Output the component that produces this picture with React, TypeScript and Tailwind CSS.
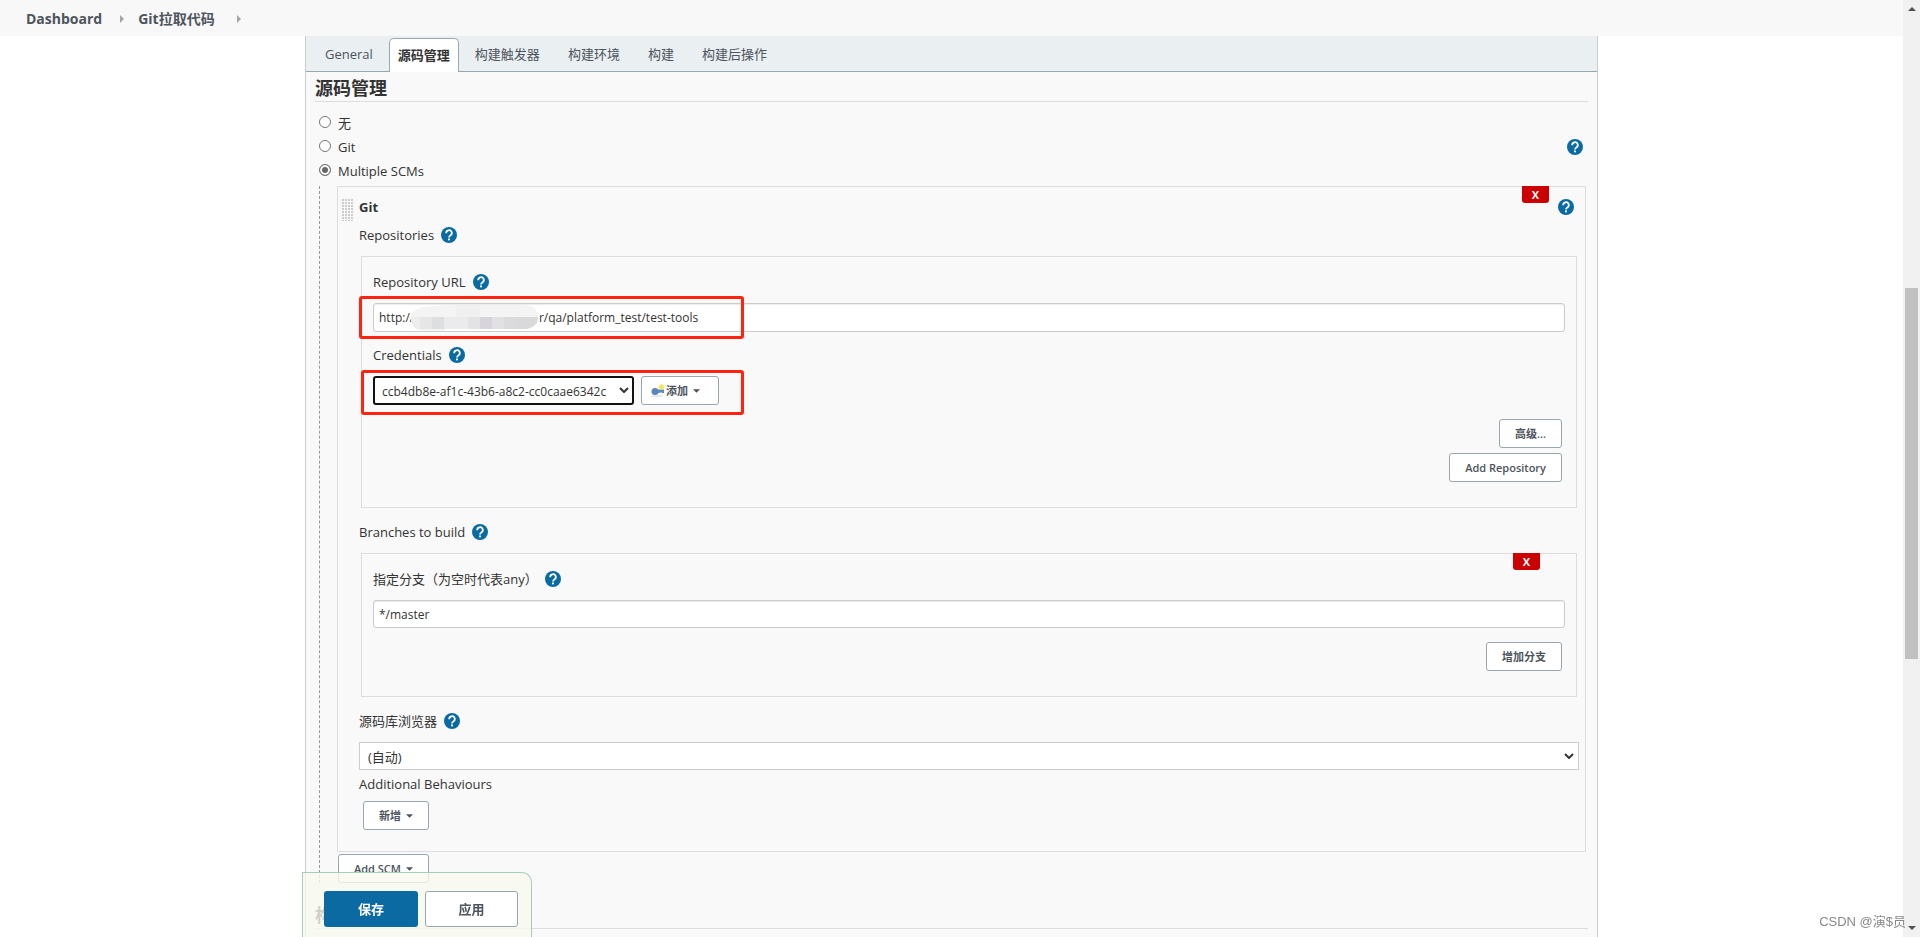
import { useState } from "react";
import type { ReactNode } from "react";

const TABS = ["General", "源码管理", "构建触发器", "构建环境", "构建", "构建后操作"];
const SCM_OPTIONS = ["无", "Git", "Multiple SCMs"];
const REPO_URL = "http://" + " ".repeat(40) + "r/qa/platform_test/test-tools";

const HelpIcon = ({ label }: { label: string }) => (
  <button type="button" aria-label={`Help: ${label}`} className="block size-4 shrink-0">
    <svg viewBox="0 0 24 24" className="size-4">
      <circle cx="12" cy="12" r="12" fill="#0b6aa2" />
      <path d="M7.800 9.400a4.200 4.200 0 1 1 6.400 3.200c-1.500 1-2.200 1.600-2.200 3.200" fill="none" stroke="#fff" strokeWidth="2.600" />
      <rect x="10.600" y="17.200" width="2.800" height="2.800" fill="#fff" />
    </svg>
  </button>
);

const Caret = () => (
  <svg viewBox="0 0 8 4" className="h-1 w-[7px]" aria-hidden="true">
    <path d="M0 0h8L4 4z" fill="#4d545d" />
  </svg>
);

const KeyIcon = () => (
  <svg viewBox="0 0 16 16" className="size-4" aria-hidden="true">
    <ellipse cx="7" cy="13" rx="6" ry="1.500" fill="#e6e8ec" />
    <circle cx="5" cy="8.500" r="3.500" fill="#5b85c2" />
    <path d="M7 6.500h7v3.500h-2l-1-1-1 1H7z" fill="#6088c0" />
    <circle cx="11.500" cy="4" r="2.500" fill="#f7ee6a" />
    <path d="M11.500 1v6M8.500 4h6" stroke="#f0e040" strokeWidth="1" />
  </svg>
);

const Chevron = () => (
  <svg viewBox="0 0 10 6" className="pointer-events-none absolute top-[11px] right-[5px] h-[6px] w-[10px]" aria-hidden="true">
    <path d="M1 1l4 4 4-4" fill="none" stroke="#333" strokeWidth="2" />
  </svg>
);

const Crumb = () => (
  <svg viewBox="0 0 4 8" className="h-[8px] w-1" aria-hidden="true">
    <path d="M0 0l4 4-4 4z" fill="#a5a5a5" />
  </svg>
);

const Button = ({ children, className = "" }: { children: ReactNode; className?: string }) => (
  <button
    type="button"
    className={`flex h-[29px] items-center justify-center rounded-[3px] border border-[#98a6ad] bg-white text-[11px] font-semibold text-[#4d545d] ${className}`}
  >
    {children}
  </button>
);

const DeleteButton = ({ className }: { className: string }) => (
  <button
    type="button"
    aria-label="Delete"
    className={`absolute -top-px h-[17px] w-[27px] rounded-b-[3px] bg-[#c00] text-[11px] leading-4 font-bold text-white ${className}`}
  >
    X
  </button>
);

const Label = ({ children, htmlFor, help }: { children: ReactNode; htmlFor?: string; help?: string }) => (
  <div className="flex h-5 items-center gap-[7px]">
    <label htmlFor={htmlFor}>{children}</label>
    {help && <HelpIcon label={help} />}
  </div>
);

const SectionTitle = ({ children }: { children: ReactNode }) => (
  <h2 className="h-[30px] border-b border-[#ddd] text-lg leading-8 font-bold">{children}</h2>
);

const inputClass =
  "block w-full rounded-[3px] border border-[#ccc] bg-white px-[5px] text-xs shadow-[inset_0_1px_1px_rgba(0,0,0,0.08)] outline-none";

// Pixel mosaic laid over the host part of the repository URL
const Mosaic = () => (
  <svg viewBox="0 0 128 26" className="absolute top-[2px] left-[38px] h-[26px] w-32" aria-hidden="true">
    <clipPath id="mosaic">
      <path d="M13 2L40 0h75q12 2 12 12t-12 12H34v2H12Q0 24 0 14T13 2z" />
    </clipPath>
    <g clipPath="url(#mosaic)">
      <rect width="128" height="26" fill="#f4f4f5" />
      <rect x="45" width="24" height="12" fill="#f0f0f1" />
      <rect y="12" width="9" height="12" fill="#ededed" />
      <rect x="9" y="12" width="12" height="12" fill="#e6e6e7" />
      <rect x="21" y="12" width="12" height="12" fill="#dcdedf" />
      <rect x="33" y="12" width="24" height="12" fill="#ebebed" />
      <rect x="57" y="12" width="12" height="12" fill="#e3e2e5" />
      <rect x="69" y="12" width="12" height="12" fill="#d7d5d9" />
      <rect x="81" y="12" width="12" height="12" fill="#e1e1e4" />
      <rect x="93" y="12" width="12" height="12" fill="#dbdbde" />
      <rect x="105" y="12" width="23" height="12" fill="#d9d9db" />
    </g>
  </svg>
);

const ScrollBar = () => (
  <div className="fixed inset-y-0 right-0 z-30 flex w-[17px] flex-col items-center bg-[#f1f1f1]" aria-hidden="true">
    <svg viewBox="0 0 8 4" className="mt-[7px] h-1 w-2">
      <path d="M4 0l4 4H0z" fill="#505050" />
    </svg>
    <div className="mt-[277px] h-[371px] w-[13px] bg-[#c1c1c1]" />
    <svg viewBox="0 0 8 4" className="mt-auto mb-[7px] h-1 w-2">
      <path d="M0 0h8L4 4z" fill="#505050" />
    </svg>
  </div>
);

const App = () => {
  const [tab, setTab] = useState("源码管理");
  const [scm, setScm] = useState("Multiple SCMs");

  return (
    <div className="h-screen overflow-hidden bg-white pr-[17px] font-['Segoe_UI','Open_Sans','Noto_Sans_CJK_SC',sans-serif] text-[13px] leading-5 text-[#333]">
      <nav className="flex h-9 items-center bg-[#f8f8f8] pt-[2px] pl-[26px] text-sm font-bold text-[#4d545d]">
        <a href="#dashboard" className="mr-[18px]">Dashboard</a>
        <Crumb />
        <a href="#job" className="mr-[22px] ml-[14px]">Git拉取代码</a>
        <Crumb />
      </nav>

      <main className="mx-[305px] h-full border-x border-[#ccc] bg-[#f9f9f9]">
        <div role="tablist" className="flex h-9 items-end border-b border-[#98a6ad] bg-[#eaeff2] pl-[5px] text-[#4d545d]">
          {TABS.map((name) => (
            <button
              key={name}
              type="button"
              role="tab"
              aria-selected={tab === name}
              onClick={() => setTab(name)}
              className={
                tab === name
                  ? "mx-[2px] -mb-px h-[34px] rounded-t-[5px] border border-b-0 border-[#98a6ad] bg-white px-2 pb-[2px] font-bold text-[#333]"
                  : "h-[33px] px-[14px] pb-[2px]"
              }
            >
              {name}
            </button>
          ))}
        </div>

        <div className="px-[9px]">
          <SectionTitle>源码管理</SectionTitle>

          <div className="mt-[9px] ml-1">
            {SCM_OPTIONS.map((name) => (
              <div key={name} className="flex h-6 items-center">
                <input
                  id={name}
                  type="radio"
                  name="scm"
                  checked={scm === name}
                  onChange={() => setScm(name)}
                  className="mr-[7px] mb-[2px] size-3 appearance-none rounded-full border border-[#767676] bg-white checked:bg-[#666] checked:shadow-[inset_0_0_0_2px_#fff]"
                />
                <label htmlFor={name}>{name}</label>
                {name === "Git" && (
                  <div className="mr-[5px] ml-auto">
                    <HelpIcon label="Git" />
                  </div>
                )}
              </div>
            ))}
          </div>

          <div className="mt-[3px] mr-[2px] ml-1 border-l border-dashed border-[#999] pl-[17px]">
            <section className="relative border border-[#ddd] pt-[10px] pr-[6px] pb-[21px] pl-[21px]">
              <svg className="absolute top-3 left-1 h-[22px] w-[11px]" aria-hidden="true">
                <pattern id="grip" width="3" height="3" patternUnits="userSpaceOnUse">
                  <rect width="2" height="2" fill="#ccc" />
                </pattern>
                <rect width="11" height="22" fill="url(#grip)" />
              </svg>
              <DeleteButton className="right-9" />
              <div className="flex h-5 items-center justify-between pr-[5px]">
                <h3 className="font-bold">Git</h3>
                <HelpIcon label="Git" />
              </div>

              <div className="mt-2">
                <Label help="Repositories">Repositories</Label>
              </div>
              <div className="mx-[2px] mt-[11px] border border-[#ddd] px-[11px] pt-[15px] pb-[25px]">
                <Label htmlFor="url" help="Repository URL">Repository URL</Label>
                <div className="relative mt-[11px]">
                  <input id="url" className={`${inputClass} h-[29px]`} defaultValue={REPO_URL} />
                  <Mosaic />
                  <div className="pointer-events-none absolute -top-[7px] -left-[14px] h-[43px] w-[385px] rounded-[3px] border-3 border-[#ff2310]" />
                </div>
                <div className="mt-[13px]">
                  <Label htmlFor="credentials" help="Credentials">Credentials</Label>
                </div>
                <div className="relative mt-[11px] flex gap-[7px]">
                  <div className="relative">
                    <select
                      id="credentials"
                      className="block h-[29px] w-[261px] appearance-none rounded-[3px] border-2 border-[#101010] bg-white pt-[2px] pl-[7px] text-xs outline-none"
                    >
                      <option>ccb4db8e-af1c-43b6-a8c2-cc0caae6342c</option>
                    </select>
                    <Chevron />
                  </div>
                  <Button className="w-[78px] pr-[10px]">
                    <KeyIcon />
                    <span className="mr-[5px]">添加</span>
                    <Caret />
                  </Button>
                  <div className="pointer-events-none absolute -top-[6px] -left-3 h-[45px] w-[383px] rounded-[3px] border-3 border-[#ff2310]" />
                </div>
                <div className="mt-[14px] flex flex-col items-end gap-[5px] pr-[3px]">
                  <Button className="px-[15px]">高级...</Button>
                  <Button className="px-[15px]">Add Repository</Button>
                </div>
              </div>

              <div className="mt-[14px]">
                <Label help="Branches to build">Branches to build</Label>
              </div>
              <div className="relative mx-[2px] mt-[11px] border border-[#ddd] px-[11px] pt-[15px] pb-[25px]">
                <DeleteButton className="right-9" />
                <Label htmlFor="branch" help="指定分支">指定分支（为空时代表any）</Label>
                <div className="mt-[11px]">
                  <input id="branch" className={`${inputClass} h-7`} defaultValue="*/master" />
                </div>
                <div className="mt-[14px] flex justify-end pr-[3px]">
                  <Button className="px-[15px]">增加分支</Button>
                </div>
              </div>

              <div className="mt-[14px]">
                <Label htmlFor="browser" help="源码库浏览器">源码库浏览器</Label>
              </div>
              <div className="relative mt-[11px]">
                <select id="browser" className="block h-7 w-full appearance-none border border-[#ccc] bg-white pt-[2px] pl-2 outline-none">
                  <option>(自动)</option>
                </select>
                <Chevron />
              </div>
              <div className="mt-1">
                <Label>Additional Behaviours</Label>
              </div>
              <div className="mt-[7px] ml-1 flex">
                <Button className="gap-[5px] px-[15px]">新增<Caret /></Button>
              </div>
            </section>
            <div className="mt-[2px] ml-px flex">
              <Button className="gap-[5px] px-[15px]">Add SCM<Caret /></Button>
            </div>
          </div>

          <div className="mt-4">
            <SectionTitle>构建触发器</SectionTitle>
          </div>
        </div>
      </main>

      <div className="fixed bottom-0 left-[302px] flex h-[65px] gap-[7px] rounded-tr-[10px] border border-b-0 border-[#a6cdb8] bg-[#f7f9ee]/80 pt-[18px] pr-[13px] pl-[21px]">
        <button type="button" className="h-9 w-[94px] rounded-[3px] bg-[#0b6aa2] font-bold text-white">保存</button>
        <button type="button" className="h-9 w-[93px] rounded-[3px] border border-[#98a6ad] bg-white font-semibold text-[#4d545d]">应用</button>
      </div>

      <div className="pointer-events-none fixed right-[14px] bottom-[5px] z-40 font-['Liberation_Sans','Noto_Sans_CJK_SC',sans-serif] text-[13px] text-[#888]">
        CSDN @演$员
      </div>
      <ScrollBar />
    </div>
  );
};

export default App;
